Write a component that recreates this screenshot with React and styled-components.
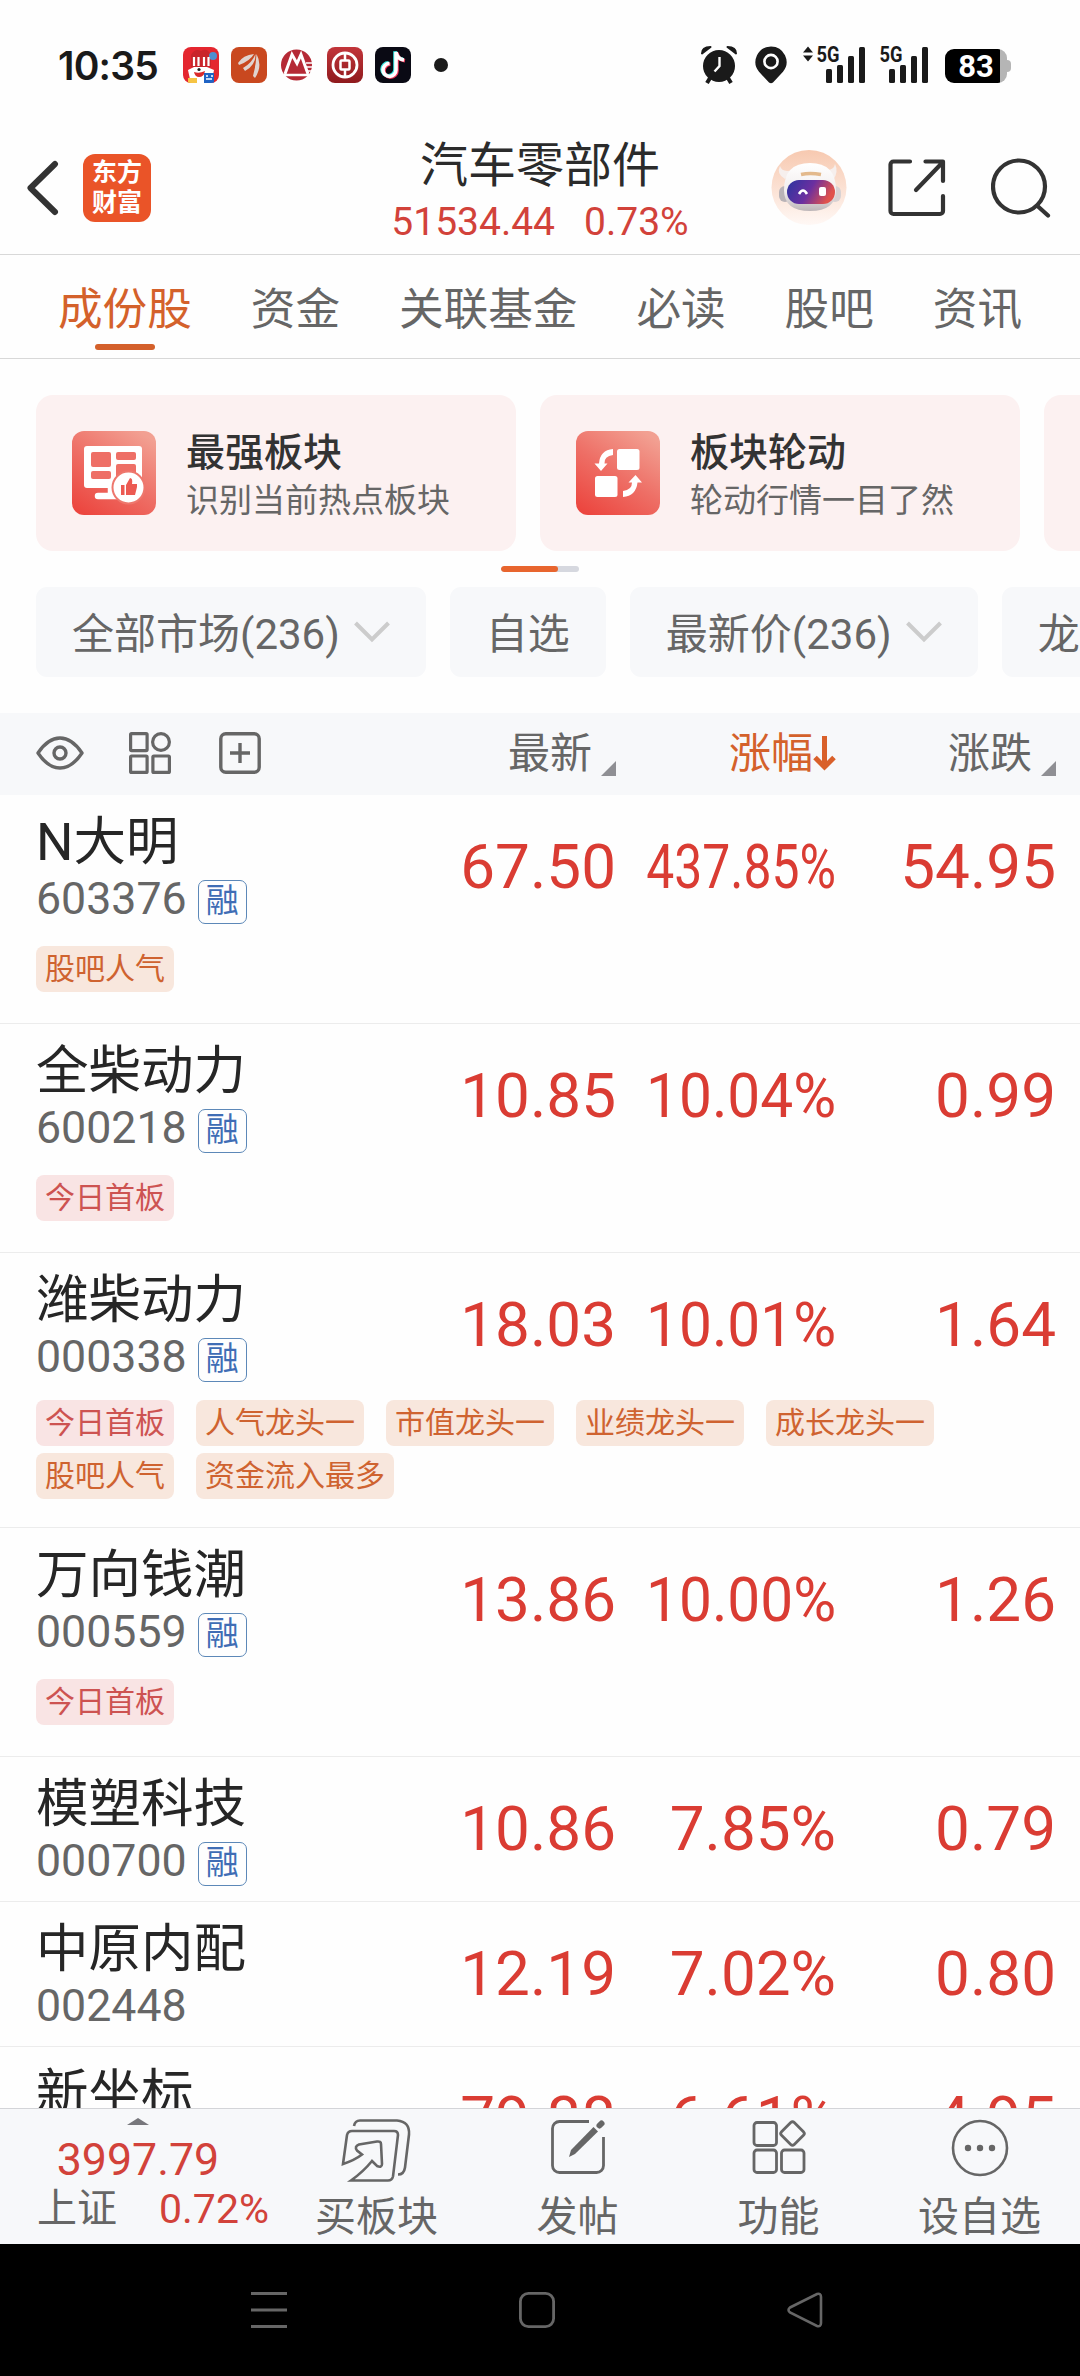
import React from 'react'
import styled, { createGlobalStyle } from 'styled-components'

const tabs = ['成份股', '资金', '关联基金', '必读', '股吧', '资讯']

const stocks = [
  { name: 'N大明', code: '603376', margin: true, price: '67.50', pct: '437.85%', squeeze: 0.804, diff: '54.95', tags: ['股吧人气'] },
  { name: '全柴动力', code: '600218', margin: true, price: '10.85', pct: '10.04%', squeeze: 0.945, diff: '0.99', tags: ['今日首板'] },
  {
    name: '潍柴动力',
    code: '000338',
    margin: true,
    price: '18.03',
    pct: '10.01%',
    squeeze: 0.945,
    diff: '1.64',
    tags: ['今日首板', '人气龙头一', '市值龙头一', '业绩龙头一', '成长龙头一', '股吧人气', '资金流入最多'],
  },
  { name: '万向钱潮', code: '000559', margin: true, price: '13.86', pct: '10.00%', squeeze: 0.945, diff: '1.26', tags: ['今日首板'] },
  { name: '模塑科技', code: '000700', margin: true, price: '10.86', pct: '7.85%', diff: '0.79', tags: [] },
  { name: '中原内配', code: '002448', margin: false, price: '12.19', pct: '7.02%', diff: '0.80', tags: [] },
  { name: '新坐标', code: '', margin: false, price: '79.88', pct: '6.61%', diff: '4.95', tags: [] },
]

const Signal = ({ arrows }) => (
  <SignalSvg width={arrows ? 63 : 49} height='38' viewBox={arrows ? '0 0 63 38' : '14 0 49 38'} fill='#1a1a1a'>
    {arrows && <path d='M5 0.5l5 6H0zM5 15.5l5-6H0z' />}
    <text x='13.5' y='16' fontSize='22' fontWeight='700' fontFamily='Roboto, sans-serif' textLength='23' lengthAdjust='spacingAndGlyphs'>5G</text>
    <rect x='23' y='23' width='6' height='14' rx='1.5' />
    <rect x='34' y='19' width='6' height='18' rx='1.5' />
    <rect x='45' y='10' width='6' height='27' rx='1.5' />
    <rect x='56' y='1' width='6' height='36' rx='1.5' />
  </SignalSvg>
)

const StatusApps = () => (
  <Apps>
    <svg width='36' height='36' viewBox='0 0 36 36'>
      <defs>
        <clipPath id='app'><rect width='36' height='36' rx='8' /></clipPath>
        <linearGradient id='boc' x1='0' y1='0' x2='0' y2='1'>
          <stop offset='0' stopColor='#c2353a' />
          <stop offset='1' stopColor='#8f1a1d' />
        </linearGradient>
      </defs>
      <g clipPath='url(#app)'>
        <rect width='36' height='36' fill='#e4262f' />
        <path d='M8 8Q12 1 18 4Q24 0 28 8L28 20H8z' fill='#c9242b' />
        <circle cx='30' cy='9' r='4' fill='#4f8fd0' />
        <path d='M11 10v9M15.500 10v9M21 10v9M25.500 10v9' stroke='#fff' strokeWidth='2.200' />
        <path d='M5 23l6-3h13l7 3-3 14H8z' fill='#fff' />
        <path d='M11 25q5 2 11-1q-1 6-6 6q-4 0-5-5' fill='#d92a2a' />
        <circle cx='16' cy='22.500' r='1.600' fill='#222' />
        <rect x='21' y='26' width='10' height='10' fill='#1f63c4' />
        <path d='M23 29h2m3 0h2m-7 3h6' stroke='#fff' strokeWidth='1.300' />
        <path d='M5 31h9v5H5z' fill='#f6c443' />
      </g>
    </svg>
    <svg width='36' height='36' viewBox='0 0 36 36'>
      <rect width='36' height='36' rx='8' fill='#c9481f' />
      <path d='M7 16Q12 8 23 7Q19 14 8 18zM12 21Q21 16 24.500 7Q25 18 14 24zM22 29Q25 18 25.500 7Q32 19 24 31z' fill='#e0d3cf' />
    </svg>
    <svg width='36' height='36' viewBox='0 0 36 36'>
      <circle cx='17.500' cy='18' r='15.500' fill='#b52a36' />
      <path d='M6 27L13 7.500l5 9 4-9 7 19.500' fill='none' stroke='#fff' strokeWidth='3' />
      <path d='M5 28h25' fill='none' stroke='#fff' strokeWidth='2.500' />
      <path d='M27 16h9M27 20h9M28 24h7' stroke='#fff' strokeWidth='1.300' />
    </svg>
    <svg width='36' height='36' viewBox='0 0 36 36'>
      <rect width='36' height='36' rx='8' fill='url(#boc)' />
      <circle cx='18' cy='18' r='12' fill='none' stroke='#fff' strokeWidth='2.800' />
      <rect x='13.500' y='13.500' width='9' height='9' rx='1' fill='none' stroke='#fff' strokeWidth='2.500' />
      <path d='M18 6v7M18 23v7' stroke='#fff' strokeWidth='2.500' />
    </svg>
    <svg width='36' height='36' viewBox='0 0 36 36' fill='none' strokeWidth='3.600'>
      <rect width='36' height='36' rx='8' fill='#0a0a14' />
      <path d='M15 16.500a6.500 6.500 0 1 0 6.500 6.500V5q1 7 8 8' stroke='#38e5e0' transform='translate(-1.500 -0.700)' />
      <path d='M15 16.500a6.500 6.500 0 1 0 6.500 6.500V5q1 7 8 8' stroke='#f0385a' transform='translate(0.500 0.700)' />
      <path d='M15 16.500a6.500 6.500 0 1 0 6.500 6.500V5q1 7 8 8' stroke='#fff' transform='translate(-0.500 0)' />
    </svg>
    <Dot />
  </Apps>
)

const StatusBar = () => (
  <Status>
    <Clock>10:35</Clock>
    <StatusApps />
    <StatusRight>
      <svg width='38' height='40' viewBox='0 0 38 40'>
        <circle cx='19' cy='21' r='16' fill='#1a1a1a' />
        <path d='M2 8.500Q2 2 10.500 2zM36 8.500Q36 2 27.500 2z' fill='#1a1a1a' stroke='#1a1a1a' strokeWidth='2' strokeLinejoin='round' />
        <path d='M10 33l-3 5M28 33l3 5' stroke='#1a1a1a' strokeWidth='4' />
        <path d='M19.500 12v9l-5 5.500' fill='none' stroke='#fff' strokeWidth='2.400' />
      </svg>
      <Pin width='32' height='38' viewBox='0 0 32 38'>
        <path d='M16 0.500a15.500 15.500 0 0 1 12 25.300L18 36.500q-2 1.600-4 0L4 25.800A15.500 15.500 0 0 1 16 0.500z' fill='#1a1a1a' />
        <circle cx='16' cy='15.500' r='6.600' fill='none' stroke='#fff' strokeWidth='2.600' />
      </Pin>
      <Signal arrows />
      <Gap />
      <Signal />
      <Battery>
        <BatteryBody>83</BatteryBody>
        <BatteryCap />
      </Battery>
    </StatusRight>
  </Status>
)

const Robot = () => (
  <svg width='76' height='76' viewBox='0 0 76 76'>
    <defs>
      <linearGradient id='peach' x1='0' y1='0' x2='0' y2='1'>
        <stop offset='0' stopColor='#f7c9b0' />
        <stop offset='1' stopColor='#fff8f5' />
      </linearGradient>
      <linearGradient id='visor' x1='0' y1='0' x2='1' y2='0.300'>
        <stop offset='0' stopColor='#2b35a0' />
        <stop offset='0.550' stopColor='#6b2fa0' />
        <stop offset='1' stopColor='#e0524c' />
      </linearGradient>
      <linearGradient id='shell' x1='0' y1='0' x2='0' y2='1'>
        <stop offset='0' stopColor='#ffffff' />
        <stop offset='0.600' stopColor='#f1eded' />
        <stop offset='1' stopColor='#bdb6b8' />
      </linearGradient>
    </defs>
    <circle cx='38' cy='37.500' r='37.500' fill='url(#peach)' />
    <path d='M9 16q-4 8 5 13l8-9q-11 3-13-4zM64 14q4 8-2 16l-9-10q10 1 11-6z' fill='#f6efed' />
    <rect x='8' y='36' width='12' height='16' rx='6' fill='#b9b3b7' />
    <rect x='58' y='36' width='12' height='16' rx='6' fill='#d8d2d3' />
    <path d='M13 40q0-27 26-27t26 27q0 21-26 21T13 40z' fill='url(#shell)' />
    <path d='M30 24.500q9-2 20 0' stroke='#e3b98c' strokeWidth='3.500' fill='none' />
    <rect x='16' y='30' width='48' height='24' rx='12' fill='url(#visor)' />
    <path d='M28 44q4-7 8 0' stroke='#fff' strokeWidth='2.600' fill='none' />
    <rect x='48' y='37' width='7' height='9' rx='2' fill='#fff' />
  </svg>
)

const TitleBar = () => (
  <Header>
    <HeaderLeft>
      <svg width='32' height='56' viewBox='0 0 32 56' fill='none' stroke='#333' strokeWidth='6' strokeLinecap='round' strokeLinejoin='round'>
        <path d='M28 4L3.500 28 28 52' />
      </svg>
      <Logo>
        <span>东方</span>
        <span>财富</span>
      </Logo>
    </HeaderLeft>
    <HeaderTitle>
      <h1>汽车零部件</h1>
      <p>
        <span>51534.44</span>
        <span>0.73%</span>
      </p>
    </HeaderTitle>
    <HeaderRight>
      <Robot />
      <svg width='58' height='58' viewBox='0 0 58 58' fill='none' stroke='#333' strokeWidth='4.200' strokeLinecap='round' strokeLinejoin='round'>
        <path d='M22 2.500H5.500a3 3 0 0 0-3 3V52a3 3 0 0 0 3 3H52a3 3 0 0 0 3-3V37' />
        <path d='M37.500 2.500H55V22M54 4L28 31' />
      </svg>
      <svg width='60' height='60' viewBox='0 0 60 60' fill='none' stroke='#333' strokeWidth='4.200' strokeLinecap='round'>
        <circle cx='28' cy='28.500' r='26' />
        <path d='M46.500 48L57 57.500' />
      </svg>
    </HeaderRight>
  </Header>
)

const StrongIcon = () => (
  <svg width='84' height='84' viewBox='0 0 84 84'>
    <defs>
      <linearGradient id='tile' x1='0.150' y1='1' x2='0.800' y2='0'>
        <stop offset='0' stopColor='#ec463f' />
        <stop offset='0.500' stopColor='#ee6f66' />
        <stop offset='1' stopColor='#f2a092' />
      </linearGradient>
    </defs>
    <rect width='84' height='84' rx='12' fill='url(#tile)' />
    <rect x='12' y='15' width='58' height='42' rx='3' fill='#fff' />
    <path d='M39 56v9M26 65h20' stroke='#fff' strokeWidth='6.500' strokeLinecap='round' />
    <g fill='#ee6f66'>
      <rect x='19' y='21' width='20' height='15' rx='2' />
      <rect x='44' y='21' width='20' height='8' rx='2' />
      <rect x='19' y='40' width='20' height='8' rx='2' />
      <rect x='44' y='33' width='20' height='14' rx='2' />
    </g>
    <circle cx='56.500' cy='56.500' r='16' fill='#fff' stroke='#ee776d' strokeWidth='2' />
    <path d='M49 54h3.500v10H49zM54 54l4-7q3 0 2 6h5v3l-2 8h-9z' fill='#ec5a52' />
  </svg>
)

const RotateIcon = () => (
  <svg width='84' height='84' viewBox='0 0 84 84'>
    <rect width='84' height='84' rx='12' fill='url(#tile)' />
    <rect x='41' y='18' width='22.500' height='21' rx='2.500' fill='#fff' />
    <rect x='19' y='45' width='22.500' height='21' rx='2.500' fill='#fff' />
    <path d='M37 18v6q-9 1-8.500 8.500H31.500L25 40l-6.500-7.500h4.500Q24 19 37 18z' fill='#fff' />
    <path d='M47 66v-6q9-1 9-8.500h-3.500L59.500 44l6.500 7.500h-4.500Q60 65 47 66z' fill='#fff' />
  </svg>
)

const Chevron = () => (
  <svg width='36' height='22' viewBox='0 0 36 22' fill='none' stroke='#ccc' strokeWidth='4'>
    <path d='M1.500 2L18 18.500 34.500 2' />
  </svg>
)

const Corner = () => (
  <svg width='15' height='15' viewBox='0 0 15 15'>
    <path d='M15 0v15H0z' fill='#8f8f94' />
  </svg>
)

const TableHead = () => (
  <Head>
    <Tools>
      <svg width='48' height='34' viewBox='0 0 48 34' fill='none' stroke='#666' strokeWidth='3.400'>
        <path d='M2 17Q12 2 24 2T46 17Q36 32 24 32T2 17z' strokeLinejoin='round' />
        <circle cx='24' cy='17' r='6' />
      </svg>
      <svg width='42' height='42' viewBox='0 0 42 42' fill='none' stroke='#666' strokeWidth='3.200'>
        <rect x='1.600' y='1.600' width='16.500' height='17' rx='1' />
        <circle cx='32' cy='10' r='8.400' />
        <rect x='1.600' y='24' width='16.500' height='16.400' rx='1' />
        <rect x='23.900' y='24' width='16.500' height='16.400' rx='1' />
      </svg>
      <svg width='42' height='42' viewBox='0 0 42 42' fill='none' stroke='#666' strokeWidth='3.400'>
        <rect x='1.800' y='1.800' width='38.400' height='38.400' rx='5' />
        <path d='M11 21h20M21 11v20' />
      </svg>
    </Tools>
    <HeadCell>
      <span>最新</span>
      <Corner />
    </HeadCell>
    <HeadCell $active>
      <span>涨幅</span>
      <svg width='23' height='36' viewBox='0 0 23 36' fill='none' stroke='#d9602a' strokeWidth='5'>
        <path d='M11.500 0v31M2 21.500l9.500 9.500 9.500-9.500' />
      </svg>
    </HeadCell>
    <HeadCell>
      <span>涨跌</span>
      <Corner />
    </HeadCell>
  </Head>
)

const StockRow = ({ stock }) => (
  <Row>
    <RowMain>
      <div>
        <Name>{stock.name}</Name>
        <Code>
          {stock.code}
          {stock.margin && <Badge>融</Badge>}
        </Code>
      </div>
      <Num>{stock.price}</Num>
      <Num>
        <Fit $x={stock.squeeze}>{stock.pct}</Fit>
      </Num>
      <Num>{stock.diff}</Num>
    </RowMain>
    {stock.tags.length > 0 && (
      <Tags $multi={stock.tags.length > 5}>
        {stock.tags.map((tag) => (
          <Tag key={tag} $red={tag === '今日首板'}>
            {tag}
          </Tag>
        ))}
      </Tags>
    )}
  </Row>
)

const BottomBar = () => (
  <Bottom>
    <IndexBox>
      <svg width='22' height='7' viewBox='0 0 22 7'>
        <path d='M11 0l11 7H0z' fill='#77777c' />
      </svg>
      <IndexValue>3997.79</IndexValue>
      <IndexLine>
        上证<span>0.72%</span>
      </IndexLine>
    </IndexBox>
    <Action>
      <svg width='72' height='64' viewBox='0 0 72 64' fill='none' stroke='#666' strokeWidth='2.600'>
        <path d='M13 7q1-5.500 6-5.500h37q13 1 12 14l-4 33q-1 7-7 7' />
        <path d='M2 45L6 16q1-4 5-4h42q4 0 4 4l-5 41.500q-1 4-5 4H10Q22 53 31 42l5 5q5 2 5-2l-1-20q0-3-4-2.500l-18 3q-5 2-2 6l5 4Q14 41 2 45z' />
      </svg>
      买板块
    </Action>
    <Action>
      <svg width='56' height='56' viewBox='0 0 56 56' fill='none' stroke='#666' strokeWidth='2.800'>
        <path d='M39 2.500H9.500a7 7 0 0 0-7 7v37a7 7 0 0 0 7 7h37a7 7 0 0 0 7-7V18' />
        <path d='M19 38l2-7L43.500 8l4.500 4.500L25 35z' fill='#666' stroke='none' />
        <path d='M49.500 6.500l2-2' strokeWidth='6' strokeLinecap='round' />
      </svg>
      发帖
    </Action>
    <Action>
      <svg width='54' height='56' viewBox='0 0 54 56' fill='none' stroke='#666' strokeWidth='2.800'>
        <rect x='2' y='3.500' width='22.500' height='23' rx='3' />
        <rect x='2' y='31' width='22.500' height='22.500' rx='3' />
        <rect x='29.500' y='31' width='22.500' height='22.500' rx='3' />
        <rect x='31.500' y='5.500' width='18' height='18' rx='2.500' transform='rotate(45 40.500 14.500)' />
      </svg>
      功能
    </Action>
    <Action>
      <svg width='58' height='58' viewBox='0 0 58 58' fill='none' stroke='#666' strokeWidth='2.600'>
        <circle cx='29' cy='29' r='27' />
        <g fill='#666' stroke='none'>
          <circle cx='17' cy='29' r='3.200' />
          <circle cx='29' cy='29' r='3.200' />
          <circle cx='41' cy='29' r='3.200' />
        </g>
      </svg>
      设自选
    </Action>
  </Bottom>
)

const App = () => {
  return (
    <Page>
      <GlobalStyle />
      <StatusBar />
      <TitleBar />
      <Tabs>
        {tabs.map((tab, i) => (
          <Tab key={tab} $active={i === 0}>
            {tab}
          </Tab>
        ))}
      </Tabs>
      <Cards>
        <Card>
          <StrongIcon />
          <div>
            <h3>最强板块</h3>
            <p>识别当前热点板块</p>
          </div>
        </Card>
        <Card>
          <RotateIcon />
          <div>
            <h3>板块轮动</h3>
            <p>轮动行情一目了然</p>
          </div>
        </Card>
        <Card />
      </Cards>
      <Indicator>
        <span />
      </Indicator>
      <Chips>
        <Chip>
          <span>全部市场(236)</span>
          <Chevron />
        </Chip>
        <Chip>
          <span>自选</span>
        </Chip>
        <Chip>
          <span>最新价(236)</span>
          <Chevron />
        </Chip>
        <Chip>
          <span>龙</span>
        </Chip>
      </Chips>
      <TableHead />
      <List>
        {stocks.map((stock) => (
          <StockRow key={stock.name} stock={stock} />
        ))}
      </List>
      <BottomBar />
      <NavBar>
        <svg width='36' height='36' viewBox='0 0 36 36' stroke='#666' strokeWidth='3'>
          <path d='M0 1.500h36M0 18h36M0 34.500h36' />
        </svg>
        <svg width='36' height='36' viewBox='0 0 36 36' fill='none' stroke='#666' strokeWidth='2.800'>
          <rect x='1.400' y='1.400' width='33.200' height='33.200' rx='8' />
        </svg>
        <svg width='36' height='36' viewBox='0 0 36 36' fill='none' stroke='#666' strokeWidth='2.600'>
          <path d='M3 15.500L30 2q4-1 4 3v26q0 4-4 3L3 20.500q-3-2.500 0-5z' />
        </svg>
      </NavBar>
    </Page>
  )
}

const GlobalStyle = createGlobalStyle`
  * {
    box-sizing: border-box;
  }
  body {
    margin: 0;
    background: #fff;
    font-family: Roboto, 'Noto Sans CJK SC', sans-serif;
  }
  h1, h3, p {
    margin: 0;
    font-weight: 400;
  }
  svg {
    display: block;
    flex: none;
  }
`

const Page = styled.div`
  width: 1080px;
  height: 2376px;
  display: flex;
  flex-direction: column;
  overflow: hidden;
  background: #fefefe;
`

const Status = styled.div`
  height: 130px;
  flex: none;
  display: flex;
  align-items: center;
  padding: 0 69px 0 58px;
`

const Clock = styled.div`
  width: 125px;
  font-family: Inter, sans-serif;
  font-size: 39px;
  font-weight: 600;
  letter-spacing: -0.8px;
  color: #1a1a1a;
`

const Apps = styled.div`
  display: flex;
  align-items: center;
  gap: 12px;
`

const Dot = styled.i`
  width: 14px;
  height: 14px;
  margin-left: 11px;
  border-radius: 50%;
  background: #1a1a1a;
`

const StatusRight = styled.div`
  display: flex;
  align-items: center;
  margin-left: auto;
`

const SignalSvg = styled.svg`
  overflow: visible;
`

const Pin = styled.svg`
  margin: 0 16px 0 17px;
`

const Gap = styled.i`
  width: 14px;
`

const Battery = styled.div`
  display: flex;
  align-items: center;
  margin: 2px 0 0 16px;
`

const BatteryBody = styled.div`
  width: 62px;
  height: 34px;
  padding-right: 0;
  border-radius: 9px;
  background: linear-gradient(90deg, #000 55px, #b5b5b5 55px);
  color: #fff;
  font-size: 31px;
  font-weight: 700;
  line-height: 36px;
  text-align: center;
`

const BatteryCap = styled.i`
  width: 4px;
  height: 12px;
  border-radius: 0 4px 4px 0;
  background: #b5b5b5;
`

const Header = styled.header`
  height: 125px;
  flex: none;
  display: grid;
  grid-template-columns: 360px 360px 360px;
  border-bottom: 1px solid #d8d8d8;
`

const HeaderLeft = styled.div`
  display: flex;
  align-items: center;
  gap: 24px;
  padding: 0 0 9px 27px;
  height: 124px;
`

const Logo = styled.div`
  width: 68px;
  height: 68px;
  border-radius: 12px;
  background: #ea5428;
  color: #fff;
  font-size: 25px;
  font-weight: 700;
  line-height: 30px;
  display: flex;
  flex-direction: column;
  align-items: center;
  justify-content: center;
`

const HeaderTitle = styled.div`
  text-align: center;
  h1 {
    margin-top: 6px;
    font-size: 48px;
    line-height: 60px;
    color: #2b2b2b;
  }
  p {
    display: flex;
    justify-content: center;
    gap: 29px;
    font-size: 39px;
    line-height: 52px;
    color: #d2423a;
  }
`

const HeaderRight = styled.div`
  display: flex;
  align-items: center;
  padding: 0 0 9px 51px;
  svg + svg {
    margin-left: 41px;
  }
  svg + svg + svg {
    margin-left: 45px;
  }
`

const Tabs = styled.nav`
  height: 104px;
  flex: none;
  display: flex;
  gap: 59px;
  padding-left: 58px;
  border-bottom: 1px solid #d8d8d8;
`

const Tab = styled.div`
  position: relative;
  padding-top: 4px;
  font-size: 44.6px;
  line-height: 103px;
  height: 103px;
  white-space: nowrap;
  color: ${(p) => (p.$active ? '#d4612b' : '#666')};
  &::after {
    content: '';
    display: ${(p) => (p.$active ? 'block' : 'none')};
    position: absolute;
    left: 50%;
    top: 89px;
    width: 60px;
    height: 6px;
    margin-left: -30px;
    border-radius: 3px;
    background: #d4602b;
  }
`

const Cards = styled.section`
  flex: none;
  display: flex;
  gap: 24px;
  padding: 36px 0 0 36px;
  overflow: hidden;
`

const Card = styled.div`
  width: 480px;
  height: 156px;
  flex: none;
  display: flex;
  align-items: center;
  gap: 30px;
  padding-left: 36px;
  border-radius: 17px;
  background: #fcf1f1;
  h3 {
    margin-top: 8px;
    font-size: 39px;
    font-weight: 500;
    line-height: 48px;
    color: #333;
  }
  p {
    font-size: 33px;
    line-height: 48px;
    color: #666;
  }
`

const Indicator = styled.div`
  width: 78px;
  height: 6px;
  flex: none;
  margin: 15px 0 15px 501px;
  border-radius: 3px;
  background: #d6d8df;
  overflow: hidden;
  span {
    display: block;
    width: 57px;
    height: 6px;
    border-radius: 3px;
    background: #e8652e;
  }
`

const Chips = styled.section`
  flex: none;
  display: flex;
  gap: 24px;
  padding-left: 36px;
  margin-bottom: 36px;
  overflow: hidden;
`

const Chip = styled.div`
  height: 90px;
  flex: none;
  display: flex;
  align-items: center;
  gap: 14px;
  padding: 0 36px;
  border-radius: 11px;
  background: #f7f8fa;
  color: #666;
  font-size: 42px;
  white-space: nowrap;
  span {
    padding-bottom: 4px;
  }
`

const columns = '1fr 220px 220px 220px'

const Head = styled.div`
  height: 82px;
  flex: none;
  display: grid;
  grid-template-columns: ${columns};
  align-items: center;
  padding: 0 24px 2px 36px;
  background: #f7f8fa;
`

const Tools = styled.div`
  display: flex;
  align-items: center;
  gap: 45px;
  svg + svg + svg {
    margin-left: 3px;
  }
`

const HeadCell = styled.div`
  display: flex;
  align-items: center;
  justify-content: flex-end;
  font-size: 42px;
  line-height: 60px;
  color: ${(p) => (p.$active ? '#d4612b' : '#666')};
  span {
    padding-top: 2px;
  }
  svg {
    margin-top: 2px;
  }
  svg[width='15'] {
    margin: 30px 0 0 9px;
  }
`

const List = styled.main`
  flex: 1;
  min-height: 0;
  overflow: hidden;
`

const Row = styled.div`
  padding: 0 24px 0 36px;
  border-bottom: 1px solid #ececec;
`

const RowMain = styled.div`
  height: 144px;
  display: grid;
  grid-template-columns: ${columns};
  align-items: center;
`

const Name = styled.div`
  height: 64px;
  font-size: 52.5px;
  line-height: 67px;
  white-space: nowrap;
  color: #262626;
`

const Code = styled.div`
  display: flex;
  align-items: center;
  height: 52px;
  font-size: 44.7px;
  line-height: 52px;
  color: #666;
`

const Badge = styled.span`
  width: 49px;
  height: 44px;
  margin: 5px 0 0 11px;
  border: 1.5px solid #5c88b8;
  border-radius: 7px;
  color: #3f6db5;
  font-size: 33px;
  line-height: 40px;
  text-align: center;
`

const Num = styled.div`
  display: flex;
  justify-content: flex-end;
  font-size: 62px;
  line-height: 72px;
  color: #da3c33;
`

const Fit = styled.span`
  flex: none;
  transform: scaleX(${(p) => p.$x || 1});
  transform-origin: right center;
`

const Tags = styled.div`
  display: flex;
  flex-wrap: wrap;
  gap: 7px 22px;
  padding: ${(p) => (p.$multi ? '3px 0 28px' : '7px 0 31px')};
`

const Tag = styled.span`
  height: 46px;
  padding: 0 9px;
  border-radius: 8px;
  font-size: 30px;
  line-height: 46px;
  color: ${(p) => (p.$red ? '#cd5351' : '#cf6330')};
  background: ${(p) => (p.$red ? '#f9e4e4' : '#f8e7dd')};
`

const Bottom = styled.footer`
  height: 136px;
  flex: none;
  display: grid;
  grid-template-columns: 276px repeat(4, 201px);
  border-top: 1px solid #d3d4d8;
  background: #f7f8fa;
`

const IndexBox = styled.div`
  display: flex;
  flex-direction: column;
  align-items: center;
  padding-top: 9px;
`

const IndexValue = styled.div`
  margin-top: 9px;
  font-size: 44.7px;
  line-height: 52px;
  color: #d2423a;
`

const IndexLine = styled.div`
  display: flex;
  gap: 42px;
  margin-left: 30px;
  font-size: 40px;
  line-height: 46px;
  color: #666;
  white-space: nowrap;
  span {
    font-size: 41px;
    color: #d2423a;
  }
`

const Action = styled.div`
  display: flex;
  flex-direction: column;
  align-items: center;
  justify-content: space-between;
  padding: 10px 0 3px;
  font-size: 41px;
  line-height: 48px;
  color: #666;
`

const NavBar = styled.nav`
  height: 132px;
  flex: none;
  display: flex;
  align-items: center;
  gap: 232px;
  padding-left: 251px;
  background: #000;
`

export default App
